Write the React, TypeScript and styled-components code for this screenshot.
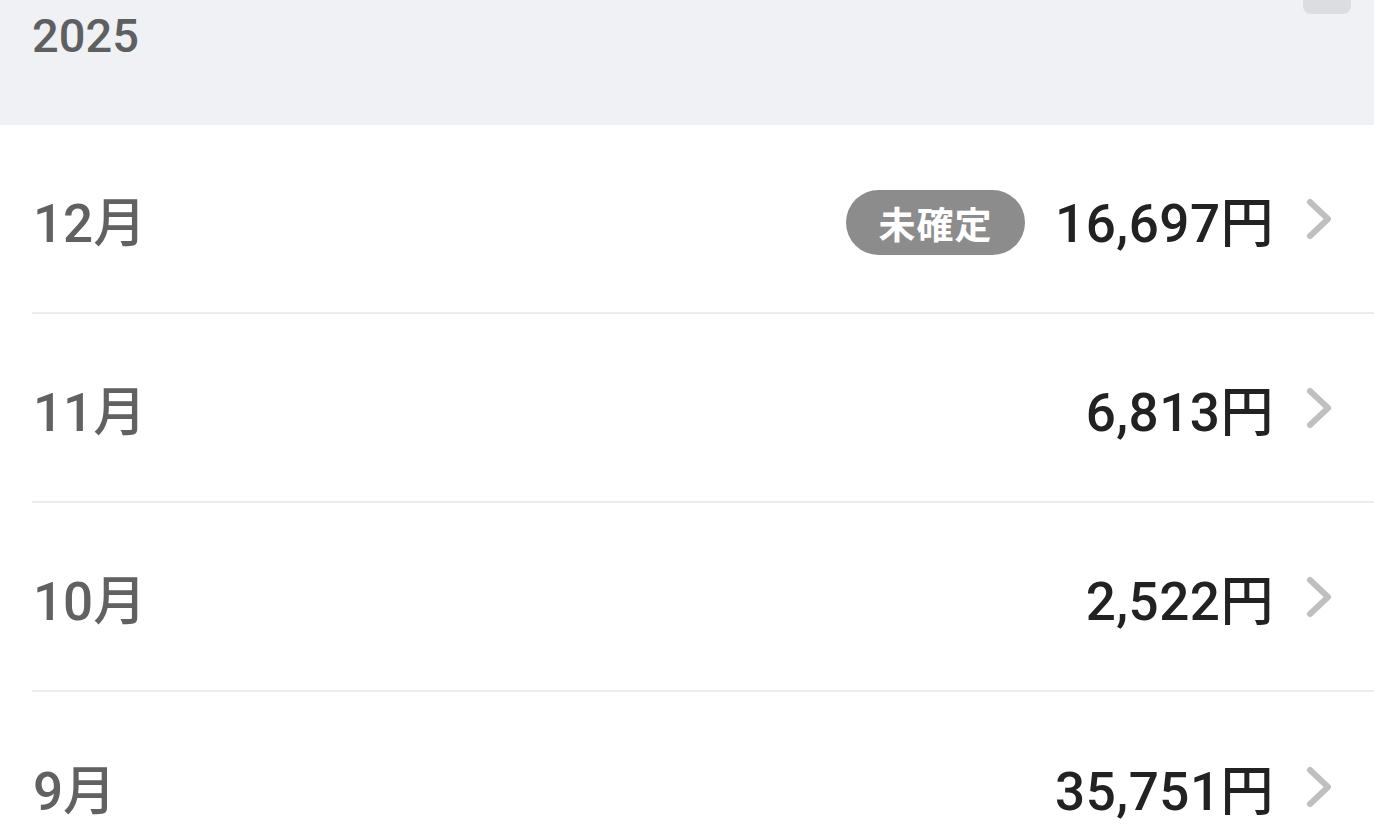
import React, { FC } from 'react'
import styled, { createGlobalStyle } from 'styled-components'

const GlobalStyle = createGlobalStyle`
  html, body {
    margin: 0;
    padding: 0;
    background: #ffffff;
    font-family: Roboto, 'Noto Sans CJK JP', sans-serif;
    overflow: hidden;
  }
`

const Page = styled.div`
  width: 1374px;
  height: 824px;
  overflow: hidden;
  background: #ffffff;
`

const YearHeader = styled.div`
  position: relative;
  height: 125px;
  box-sizing: border-box;
  padding: 5px 32px 0;
  background: #f0f1f4;
  color: #5d5f61;
  font-size: 47px;
  line-height: 62px;
  font-weight: 500;
`

const CornerTab = styled.div`
  position: absolute;
  top: 0;
  right: 23px;
  width: 48px;
  height: 14px;
  background: #dcdde0;
  border-radius: 0 0 8px 8px;
`

const Row = styled.div`
  display: flex;
  align-items: center;
  height: 189px;
  margin-left: 32px;
  padding-right: 40px;
  box-sizing: border-box;
  border-bottom: 2px solid #ececec;
  &:last-child {
    border-bottom: none;
  }
`

const Month = styled.div`
  flex: 1;
  padding-left: 1px;
  color: #616161;
  font-size: 53px;
  font-weight: 500;
`

const Badge = styled.span`
  display: inline-flex;
  align-items: center;
  justify-content: center;
  width: 179px;
  height: 65px;
  margin: 8px 30px 0 0;
  border-radius: 33px;
  background: #8c8c8c;
  color: #ffffff;
  font-size: 37px;
  font-weight: 700;
  font-family: 'Noto Sans CJK JP', sans-serif;
  letter-spacing: 1px;
`

const Amount = styled.div`
  color: #222222;
  font-size: 53px;
  font-weight: 500;
  letter-spacing: 0.5px;
`

const Chevron = styled.svg`
  margin-left: 30px;
  flex: none;
`

interface MonthRowProps {
  month: string
  amount: string
  pending?: boolean
}

const MonthRow: FC<MonthRowProps> = ({ month, amount, pending }) => (
  <Row>
    <Month>{month}</Month>
    {pending && <Badge>未確定</Badge>}
    <Amount>{amount}</Amount>
    <Chevron width='30' height='46' viewBox='0 0 30 46'>
      <polyline
        points='6,6 24,23 6,40'
        fill='none'
        stroke='#bfbfbf'
        strokeWidth='6'
        strokeLinecap='round'
        strokeLinejoin='round'
      />
    </Chevron>
  </Row>
)

const months: MonthRowProps[] = [
  { month: '12月', amount: '16,697円', pending: true },
  { month: '11月', amount: '6,813円' },
  { month: '10月', amount: '2,522円' },
  { month: '9月', amount: '35,751円' }
]

const App: FC = () => (
  <Page>
    <GlobalStyle />
    <YearHeader>
      2025
      <CornerTab />
    </YearHeader>
    {months.map((m) => (
      <MonthRow key={m.month} {...m} />
    ))}
  </Page>
)

export default App
